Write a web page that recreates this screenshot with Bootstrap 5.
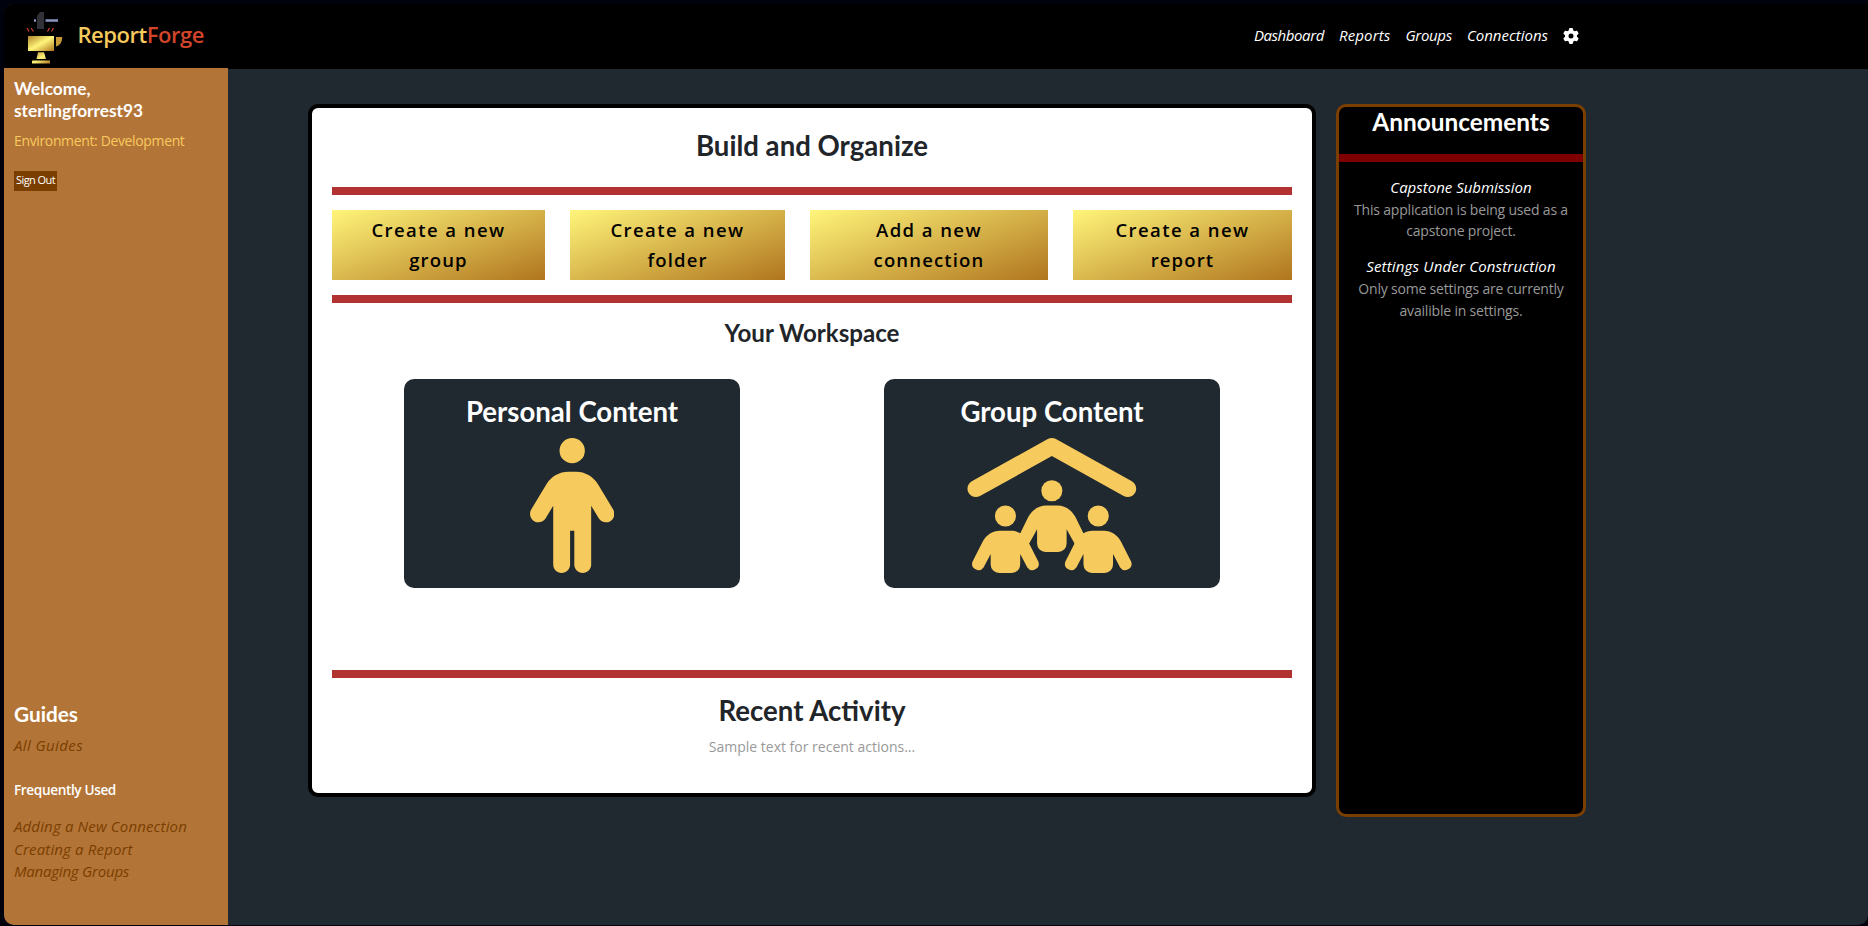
<!DOCTYPE html>
<html lang="en">
<head>
<meta charset="utf-8">
<title>ReportForge</title>
<link href="https://cdn.jsdelivr.net/npm/bootstrap@5.3.0/dist/css/bootstrap.min.css" rel="stylesheet">
<style>
body{background:#00020e;font-family:"Open Sans","Noto Sans",sans-serif;overflow:hidden;height:926px;padding:4px 0 1px 4px}
h1,h2,h3,p{margin:0}
h1,h2,h3{font-family:Lato,sans-serif;font-weight:700}
a{text-decoration:none}
h2,h3,p,a,.gold,.brand,.sign-out{white-space:nowrap}
.app-shell{height:921px;border-radius:10px 0 10px 10px;overflow:hidden;background:#212930}
.top-bar{height:64px;background:#000;padding:0 289px 0 18px}
.brand{font-size:22px;line-height:30px;font-weight:600;color:#f7ca5d;margin:-4px 0 0 13.5px;letter-spacing:-.46px}
.brand b{font-weight:600;color:#d3452b}
.nav-links{gap:15px;font-size:15px;line-height:24px;font-style:italic;font-weight:500}
.nav-links a{color:#fff;margin-top:-2px}
.nav-links a:nth-child(1){letter-spacing:-.42px}
.nav-links a:nth-child(2){letter-spacing:.14px}
.nav-links a:nth-child(3){letter-spacing:-.31px}
.side-pane{width:224px;background:#b37437;padding:10px 10px 42.5px;color:#fff}
.welcome{font-size:17.3px;line-height:22px}
.env{font-size:14px;line-height:22px;color:#f7ca5d;margin-top:7.5px;letter-spacing:-.36px}
.sign-out{font-size:11px;line-height:18px;background:#7a3f00;color:#fff;border:0;padding:0 2px 2px;margin-top:19.5px;width:43px;height:20px;letter-spacing:-.58px}
.side-pane a{display:block;color:#7a3f00;font-style:italic;font-size:15px;line-height:22.5px;letter-spacing:.15px}
.side-pane a:last-child{letter-spacing:-.22px}
.side-pane .all-guides{letter-spacing:.4px}
.guides{font-size:20.8px;line-height:26px;margin-bottom:7px}
.freq{font-size:13.6px;line-height:22px;font-weight:600;margin:22.5px 0 14px;letter-spacing:-.37px}
.stage{border-top:1px solid #000;padding:35px 282px 0 80px;gap:20px}
.main-card{width:1008px;height:693px;background:#fff;border:4px solid #000;border-radius:10px;padding:0 20px;color:#212529;text-align:center}
.main-card h2{font-size:27.6px;line-height:32px}
.main-card .build-title{padding:22px 0 25px}
.main-card h3{font-size:24.1px;line-height:28px;padding:16px 0 32px}
.main-card .recent-title{padding:17px 0 9px}
.bar-line{height:8px;background:#b23232}
.bar-low{margin-top:82px}
.actions{margin:15px 0}
.gold{height:70px;background:linear-gradient(160deg,#fff57a,#b0751e);color:#000;font-size:18.5px;line-height:30px;letter-spacing:1.15px;font-weight:600}
.gold span:first-child{letter-spacing:1.43px}
.w-group{width:213px}.w-folder{width:215px}.w-conn{width:238px}.w-report{width:219px}
.tile{width:336px;height:209px;background:#212930;border-radius:10px;color:#fff}
.main-card .tile h2{line-height:34px;padding:16px 0 9px}
.tile svg{height:135px;fill:#f7ca5d;display:block;margin:0 auto}
.news{width:250px;height:713px;background:#000;border:3px solid #7a3f00;border-radius:10px;text-align:center;color:#fff}
.news h2{font-size:24.4px;line-height:28px;padding:1px 0 18px}
.news .bar-line{background:#7f0000}
.news h3{font-family:inherit;font-style:italic;font-weight:500;font-size:15px;line-height:22px;margin-top:14px}
.news p + h3{margin-top:13.5px;letter-spacing:.18px}
.news p{letter-spacing:-.19px;padding-top:.5px}
.news p:last-child{padding-top:1px}
.news p,.sample{font-size:14px;line-height:21.5px;color:#999}
</style>
</head>
<body>
<div class="app-shell d-flex flex-column">
<header class="top-bar d-flex align-items-center justify-content-between">
 <div class="d-flex align-items-center">
 <svg class="flex-shrink-0" width="42" height="60" viewBox="22 6 42 60">
  <defs><linearGradient id="metal" x1="0" y1="0" x2="1" y2="1"><stop offset="0" stop-color="#b0842a"/><stop offset=".5" stop-color="#fff57a"/><stop offset="1" stop-color="#b0751e"/></linearGradient></defs>
  <path d="M34 19.3h2v2.4h-2zM45.5 19.3H58v2.4H45.5z" fill="#8c96c0"/>
  <path d="M37 16l3-4h4v17h-7z" fill="#303238"/>
  <path d="M27 28l2 3.5M31 28l2.5 3.5M49.5 28l-2 3.5M53.500 28l-2 3.5" stroke="#d3452b" stroke-width="1.2"/>
  <path d="M28 36h26v15H28z" fill="url(#metal)"/><path d="M56 37h6.2c0 5-2.2 8.500-6.2 9.500z" fill="#c89a35"/>
  <path d="M38 52.3h6l2 6.7h-9.500zM32 60.500h18v3H32z" fill="url(#metal)"/>
 </svg>
 <div class="brand">Report<b>Forge</b></div>
 </div>
 <nav class="nav-links d-flex align-items-center">
 <a href="#">Dashboard</a><a href="#">Reports</a><a href="#">Groups</a><a href="#">Connections</a>
 <svg width="16" height="16" viewBox="0 0 512 512" fill="#fff"><path d="M495.9 166.6c3.2 8.7 .5 18.4-6.4 24.6l-43.3 39.4c1.1 8.3 1.7 16.8 1.7 25.4s-.6 17.1-1.7 25.4l43.3 39.4c6.900 6.200 9.600 15.900 6.400 24.600c-4.400 11.900-9.700 23.300-15.800 34.300l-4.700 8.100c-6.600 11-14 21.400-22.100 31.200c-5.900 7.200-15.700 9.600-24.500 6.800l-55.700-17.700c-13.400 10.300-28.200 18.900-44 25.400l-12.500 57.100c-2 9.100-9 16.300-18.200 17.800c-13.800 2.300-28 3.500-42.500 3.500s-28.700-1.200-42.500-3.500c-9.200-1.500-16.200-8.700-18.200-17.800l-12.500-57.100c-15.800-6.500-30.600-15.100-44-25.400L83.100 425.900c-8.800 2.800-18.600 .3-24.500-6.800c-8.100-9.800-15.500-20.200-22.100-31.200l-4.700-8.100c-6.100-11-11.400-22.400-15.800-34.300c-3.200-8.700-.5-18.400 6.400-24.600l43.300-39.400C64.600 273.100 64 264.600 64 256s.6-17.100 1.700-25.400L22.400 191.200c-6.900-6.200-9.600-15.900-6.400-24.600c4.400-11.900 9.700-23.300 15.800-34.300l4.700-8.100c6.600-11 14-21.400 22.100-31.200c5.900-7.200 15.700-9.600 24.500-6.800l55.700 17.700c13.400-10.300 28.200-18.900 44-25.400l12.500-57.100c2-9.100 9-16.300 18.200-17.800C227.300 1.200 241.500 0 256 0s28.700 1.200 42.500 3.500c9.200 1.500 16.200 8.700 18.200 17.800l12.500 57.100c15.800 6.500 30.600 15.100 44 25.400l55.700-17.700c8.800-2.800 18.600-.3 24.500 6.800c8.100 9.800 15.500 20.200 22.100 31.200l4.700 8.100c6.100 11 11.400 22.400 15.800 34.300zM256 336a80 80 0 1 0 0-160 80 80 0 1 0 0 160z"/></svg>
 </nav>
</header>
<div class="d-flex flex-grow-1">
 <aside class="side-pane d-flex flex-column justify-content-between">
  <div>
   <h3 class="welcome">Welcome,<br>sterlingforrest93</h3>
   <p class="env">Environment: Development</p>
   <button class="sign-out d-block">Sign Out</button>
  </div>
  <div>
   <h2 class="guides">Guides</h2>
   <a class="all-guides" href="#">All Guides</a>
   <p class="freq">Frequently Used</p>
   <a href="#">Adding a New Connection</a>
   <a href="#">Creating a Report</a>
   <a href="#">Managing Groups</a>
  </div>
 </aside>
 <main class="stage d-flex flex-grow-1 align-items-start">
  <section class="main-card flex-shrink-0">
   <h2 class="build-title">Build and Organize</h2>
   <div class="bar-line"></div>
   <div class="actions d-flex justify-content-between">
    <div class="gold w-group d-flex flex-column justify-content-center"><span>Create a new</span><span>group</span></div>
    <div class="gold w-folder d-flex flex-column justify-content-center"><span>Create a new</span><span>folder</span></div>
    <div class="gold w-conn d-flex flex-column justify-content-center"><span>Add a new</span><span>connection</span></div>
    <div class="gold w-report d-flex flex-column justify-content-center"><span>Create a new</span><span>report</span></div>
   </div>
   <div class="bar-line"></div>
   <h3>Your Workspace</h3>
   <div class="d-flex justify-content-around">
    <div class="tile"><h2>Personal Content</h2>
     <svg viewBox="0 0 320 512"><path d="M112 48a48 48 0 1 1 96 0a48 48 0 1 1-96 0zm40 304v128c0 17.700-14.300 32-32 32s-32-14.300-32-32V256.900L59.400 304.500c-9.100 15.100-28.800 20-43.900 10.900s-20-28.800-10.900-43.900l58.300-97c17.400-28.900 48.600-46.600 82.300-46.600h29.700c33.700 0 64.900 17.700 82.300 46.600l58.300 97c9.100 15.100 4.200 34.800-10.900 43.900s-34.800 4.200-43.900-10.900L232 256.900V480c0 17.700-14.300 32-32 32s-32-14.300-32-32V352z"/></svg></div>
    <div class="tile"><h2>Group Content</h2>
     <svg viewBox="2 0 640 512" overflow="visible"><defs><path id="member" d="M123 352h42c28 0 53 17 66 42L269 469a24 24 0 0 1-42 22L200 440V480a32 32 0 0 1-32 32h-48a32 32 0 0 1-32-32V440L61 491a24 24 0 0 1-42-22L57 394c13-25 38-42 66-42z"/></defs>
     <path d="M335.500 4l288 160c15.400 8.600 21 28.100 12.400 43.500s-28.100 21-43.500 12.400L320 68.600 47.500 220c-15.400 8.600-34.900 3-43.500-12.400s-3-34.900 12.400-43.500L304.500 4c9.700-5.400 21.400-5.400 31.100 0z"/>
     <circle cx="320" cy="200" r="40"/><circle cx="144" cy="296" r="40"/><circle cx="496" cy="296" r="40"/><use href="#member"/><use href="#member" x="352"/>
     <path d="M299 256h42c29 0 54 17 68 43l32 65-34 38-31-56v54a32 32 0 0 1-32 32h-48a32 32 0 0 1-32-32v-54l-31 56-34-38 32-65c14-26 39-43 68-43z"/></svg></div>
   </div>
   <div class="bar-line bar-low"></div>
   <h2 class="recent-title">Recent Activity</h2>
   <p class="sample">Sample text for recent actions...</p>
  </section>
  <aside class="news flex-shrink-0">
   <h2>Announcements</h2>
   <div class="bar-line"></div>
   <h3>Capstone Submission</h3>
   <p>This application is being used as a<br>capstone project.</p>
   <h3>Settings Under Construction</h3>
   <p>Only some settings are currently<br>availible in settings.</p>
  </aside>
 </main>
</div>
</div>
<script src="https://cdn.jsdelivr.net/npm/bootstrap@5.3.0/dist/js/bootstrap.bundle.min.js"></script>
</body>
</html>
